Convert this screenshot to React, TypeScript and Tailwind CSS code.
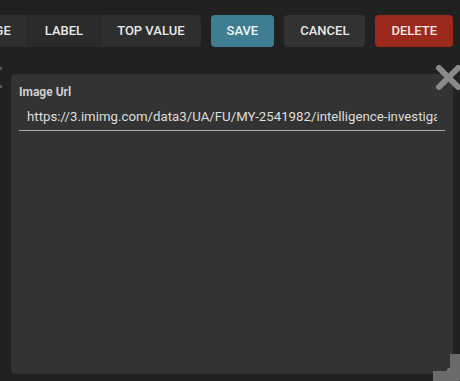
import React from "react";

export default function App() {
  const font = { fontFamily: "Roboto, 'Liberation Sans', sans-serif" };
  return (
    <div className="relative w-[460px] h-[381px] overflow-hidden bg-[#212121]" style={font}>
      <div className="flex justify-end items-center gap-[10px] pt-[15px] pr-[7px] h-[47px]">
        <div className="flex shrink-0 h-[32px] rounded-[4px] bg-[#2e2e2e] overflow-hidden text-[13px] font-medium text-[#e8e8e8]">
          <div className="flex items-center px-4 border-r border-[#282828]">IMAGE</div>
          <div className="flex items-center px-[17px] bg-[#2a2a2a] border-r border-[#282828]">LABEL</div>
          <div className="flex items-center px-4">TOP VALUE</div>
        </div>
        <div className="flex shrink-0 items-center h-[32px] px-4 rounded-[4px] bg-[#3e7d92] text-[13px] font-medium text-[#eef4f6]">SAVE</div>
        <div className="flex shrink-0 items-center h-[32px] px-4 rounded-[4px] bg-[#323232] text-[13px] font-medium text-[#e8e8e8]">CANCEL</div>
        <div className="flex shrink-0 items-center h-[32px] px-4 rounded-[4px] bg-[#9b2a1d] text-[13px] font-medium text-[#f2e6e4]">DELETE</div>
      </div>

      <div className="absolute left-0 top-[67px] w-[2px] h-[3px] bg-[#555]" />
      <div className="absolute left-0 top-[85px] w-[2px] h-[3px] bg-[#555]" />

      <div className="ml-[11px] mr-[7px] mt-[27px] h-[300px] rounded-[3px] bg-[#333333] px-2 pt-[11px]">
        <div className="text-[12px] font-bold text-[#cfcfcf] leading-[14px]">Image Url</div>
        <div className="mt-[10px] border-b border-[#a8a8a8] pb-[5px] pl-2 pr-2">
          <div className="overflow-hidden whitespace-nowrap text-[13.25px] leading-[16px] text-[#dedede]">
            https://3.imimg.com/data3/UA/FU/MY-2541982/intelligence-investigation-services-500x500.jpg
          </div>
        </div>
      </div>

      <svg className="absolute left-[435px] top-[64px]" width="27" height="27" viewBox="0 0 27 27">
        <path d="M4 4 L23 23 M23 4 L4 23" stroke="#8a8a8a" strokeWidth="6" strokeLinecap="round" />
      </svg>

      <div className="absolute left-[433px] top-[354px] w-[27px] h-[27px] border-r-[10px] border-b-[10px] border-[#6b6b6b] rounded-br-[2px]">
        <div className="absolute right-0 bottom-0 w-[3px] h-[3px] bg-[#7a7a7a] rounded-tl-[2px]" />
      </div>
    </div>
  );
}
